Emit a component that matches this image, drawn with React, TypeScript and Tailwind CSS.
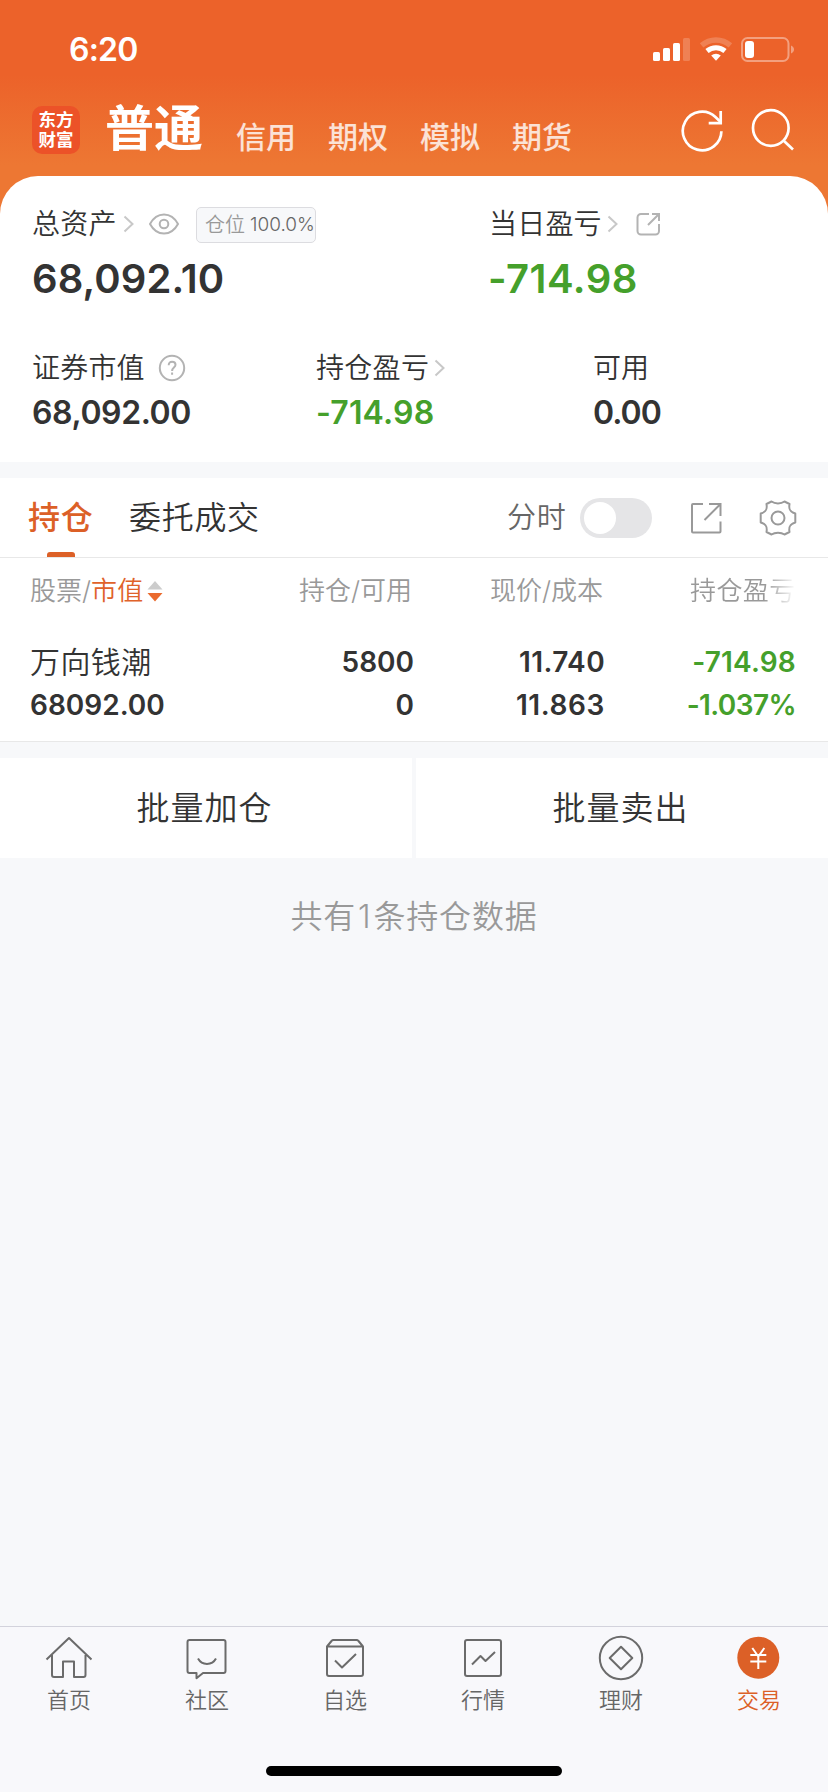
import type { ReactNode } from "react";

const Chevron = () => (
  <svg className="block h-[18px] w-[12px]" viewBox="0 0 12 18" fill="none" stroke="#c8c8c8" strokeWidth="2">
    <path d="M1.5 1.5 9.5 9l-8 7.5" />
  </svg>
);

function StatusBar() {
  return (
    <div className="flex h-[99px] items-center justify-between pr-[34px] pl-[69px]">
      <span className="text-[32px] leading-10 font-semibold tracking-[-0.8px] text-white">6:20</span>
      <svg className="block h-[26px] w-[142px]" viewBox="0 0 142 26">
        <g fill="#fff">
          <rect x="1" y="15" width="7" height="9" rx="1.6" />
          <rect x="11" y="11" width="7" height="13" rx="1.6" />
          <rect x="21" y="6" width="7" height="18" rx="1.6" />
          <rect x="31" y="1" width="7" height="23" rx="1.6" opacity=".2" />
        </g>
        <path d="M49.6 8.4a22 22 0 0 1 28.8 0" fill="none" stroke="#fff" strokeOpacity=".2" strokeWidth="5.4" />
        <path d="M55 14a14 14 0 0 1 18 0" fill="none" stroke="#fff" strokeWidth="5" />
        <path d="M59.2 18.6a7.5 7.5 0 0 1 9.6 0L64 23.8z" fill="#fff" />
        <rect x="90" y="1" width="46.5" height="23" rx="5.5" fill="none" stroke="#fff" strokeOpacity=".4" strokeWidth="2" />
        <rect x="93" y="4" width="9" height="17" rx="3" fill="#fff" />
        <path d="M139 8.5c2 .8 3 2.300 3 4s-1 3.200-3 4z" fill="#fff" fillOpacity=".4" />
      </svg>
    </div>
  );
}

function Header() {
  return (
    <div className="flex h-[77px] pl-8">
      <div className="mt-[7px] flex h-12 w-12 flex-col items-center justify-center rounded-[10px] bg-[#ec5228] text-[17.500px] leading-5 font-bold text-white">
        <span>东方</span>
        <span>财富</span>
      </div>
      <span className="mt-[1px] ml-[25px] w-[104px] text-[49px] leading-[58px] font-bold text-white">普通</span>
      <div className="mt-[20px] ml-[27px] flex gap-8 text-[30px] leading-9 font-medium text-white/80">
        {["信用", "期权", "模拟", "期货"].map((t) => (
          <span key={t} className="w-[60px] whitespace-nowrap">{t}</span>
        ))}
      </div>
      <svg className="mt-[9px] ml-[108px] h-[44px] w-[44px]" viewBox="0 0 44 44" fill="none" stroke="#fff" strokeWidth="2.700">
        <path d="M41.400 23.200A19.300 19.300 0 1 1 35.400 9L40.600 14" />
        <path d="M40.700 3v12.200H28.700" />
      </svg>
      <svg className="mt-[9px] ml-[26px] h-[44px] w-[44px]" viewBox="0 0 44 44" fill="none" stroke="#fff" strokeWidth="2.700">
        <circle cx="20.800" cy="20" r="17.800" />
        <path d="m33.500 32.500 9.500 9" />
      </svg>
    </div>
  );
}

function Summary() {
  return (
    <section className="h-[286px] rounded-t-[38px] bg-white text-[#333]">
      <div className="flex h-[48px] pt-[28px] pl-8">
        <div className="flex h-10 w-[457px] items-center">
          <span className="w-[91px] text-[28px] leading-10 tracking-[0.2px]">总资产</span>
          <Chevron />
          <svg className="ml-[14px] h-[22px] w-[30px]" viewBox="0 0 30 22" fill="none" stroke="#b3b3b3" strokeWidth="2">
            <path d="M1 11C4.500 4.500 9.300 1.500 15 1.500S25.500 4.500 29 11c-3.500 6.500-8.300 9.500-14 9.500S4.500 17.500 1 11z" />
            <circle cx="15" cy="11" r="4.300" />
          </svg>
          <div className="mt-[1px] ml-[17px] flex h-9 w-[120px] items-center rounded-[5px] border border-[#dcdce0] bg-[#f7f8fa] pl-2 whitespace-nowrap text-[#666]">
            <span className="text-[20px] leading-8 text-[#999]">仓位</span>
            <span className="ml-[5px] text-[19px] leading-8">100.0%</span>
          </div>
        </div>
        <div className="flex h-10 items-center">
          <span className="w-[118px] text-[28px] leading-10 tracking-[0.200px]">当日盈亏</span>
          <Chevron />
          <svg className="ml-[17px] h-[24px] w-[24px]" viewBox="0 0 24 24" fill="none" stroke="#b3b3b3" strokeWidth="2">
            <path d="M13 2H5a3.500 3.500 0 0 0-3.500 3.500V19A3.500 3.500 0 0 0 5 22.500h14.500A3.500 3.500 0 0 0 23 19v-7" />
            <path d="M16 2h7v7M23 2 12 13" />
          </svg>
        </div>
      </div>
      <div className="flex h-[88px] pt-[31px] pl-8 text-[40px] leading-[48px] font-semibold">
        <span className="w-[456px] tracking-[0.100px]">68,092.10</span>
        <span className="tracking-[0.500px] text-[#45a02b]">-714.98</span>
      </div>
      <div className="flex pt-[36px] pl-8 text-[28px] leading-10">
        <div className="w-[284px]">
          <div className="flex items-center">
            <span className="w-[126px] tracking-[0.200px]">证券市值</span>
            <svg className="h-[28px] w-[28px]" viewBox="0 0 28 28" fill="none" stroke="#b3b3b3" strokeWidth="2">
              <circle cx="14" cy="14" r="12.200" />
              <path d="M10.700 11.300c0-2.200 1.300-3.600 3.400-3.600s3.400 1.200 3.400 3.100c0 2.700-3.400 2.900-3.400 6.100M14.100 18.500v2.300" />
            </svg>
          </div>
          <div className="mt-[5px] text-[32px] font-semibold tracking-[-0.400px]">68,092.00</div>
        </div>
        <div className="w-[277px]">
          <div className="flex items-center">
            <span className="w-[118px] tracking-[0.300px]">持仓盈亏</span>
            <Chevron />
          </div>
          <div className="mt-[5px] text-[32px] font-semibold tracking-[0.200px] text-[#45a02b]">-714.98</div>
        </div>
        <div>
          <div>可用</div>
          <div className="mt-[5px] text-[32px] font-semibold tracking-[-1px]">0.00</div>
        </div>
      </div>
    </section>
  );
}

function Toolbar() {
  return (
    <div className="flex h-20 border-b border-[#e8e8e8] text-[32px] leading-[80px] tracking-[0.700px]">
      <div className="ml-[28px] flex w-[66px] flex-col">
        <span className="h-[74px] font-medium text-[#dc6027]">持仓</span>
        <span className="ml-[19px] h-[5px] w-7 rounded-t-[3px] bg-[#dc6027]" />
      </div>
      <span className="ml-[35px] w-[378px] text-[#333]">委托成交</span>
      <span className="w-[73px] text-[29px] leading-[80px] text-[#666]">分时</span>
      <div className="mt-5 flex h-10 w-[72px] items-center rounded-full bg-[#e5e5e7] pl-1">
        <span className="h-8 w-8 rounded-full bg-white" />
      </div>
      <svg className="mt-[24px] ml-[38px] h-[32px] w-[32px]" viewBox="0 0 32 32" fill="none" stroke="#999" strokeWidth="2">
        <path d="M13 2H3a1 1 0 0 0-1 1v26.500a1 1 0 0 0 1 1h26.500a1 1 0 0 0 1-1V19.500" />
        <path d="M19 2h11.500v12M30 2.500 14.500 18" />
      </svg>
      <svg className="mt-[21px] ml-[36px] h-[38px] w-[40px]" viewBox="-20 -19 40 38" fill="none" stroke="#999" strokeWidth="2" strokeLinejoin="round">
        <path d="M-6.500-16.500C-3-14 3-14 6.500-16.500L11.500-14C10.500-8.500 12-6 17.300-4.500V4.500C12 6 10.500 8.500 11.500 14L6.500 16.500C3 14-3 14-6.500 16.500L-11.500 14C-10.500 8.500-12 6-17.300 4.500V-4.500C-12-6-10.500-8.500-11.500-14z" />
        <circle r="6.500" />
      </svg>
    </div>
  );
}

const Cell = ({ a, b, className }: { a: ReactNode; b: ReactNode; className: string }) => (
  <div className={className}>
    <div className="h-[43px]">{a}</div>
    <div className="h-[43px]">{b}</div>
  </div>
);

function Holdings() {
  return (
    <section className="h-[184px] border-b border-[#e8e8e8] text-[#333]">
      <div className="flex h-[83px] pl-[30px] text-[26px] leading-[65px] text-[#999]">
        <div className="flex w-[184px] items-center self-start">
          <span>股票/</span>
          <span className="tracking-[0.200px] text-[#e0622a]">市值</span>
          <svg className="ml-[4px] h-[22px] w-4" viewBox="0 0 16 22">
            <path d="M8 1l7.500 8.500H.5z" fill="#ccc" />
            <path d="M8 21.500l7.500-8.500H.5z" fill="#ea6a2e" />
          </svg>
        </div>
        <span className="w-[198px] text-right">持仓/可用</span>
        <span className="w-[191px] text-right">现价/成本</span>
        <span className="ml-[87px] bg-linear-to-r from-[#999] from-70% to-[#fff] bg-clip-text tracking-[0.400px] whitespace-nowrap text-transparent">持仓盈亏</span>
      </div>
      <div className="flex pl-[30px] text-[28px] leading-[43px] font-semibold">
        <Cell className="w-[184px]" a={<span className="text-[30px] font-[350] tracking-[0.400px]">万向钱潮</span>} b="68092.00" />
        <Cell className="w-[200px] text-right" a="5800" b="0" />
        <Cell
          className="w-[191px] text-right"
          a={<span className="tracking-[0.400px]">11.740</span>}
          b={<span className="tracking-[0.600px]">11.863</span>}
        />
        <Cell
          className="w-[191px] text-right text-[#45a02b]"
          a={<span className="tracking-[0.200px]">-714.98</span>}
          b={<span className="tracking-[-0.600px]">-1.037%</span>}
        />
      </div>
    </section>
  );
}

const tabs: { label: string; icon: ReactNode; active?: boolean }[] = [
  {
    label: "首页",
    icon: <path d="M1.500 24.500 24 3l22.500 21.500M7 20v20a2 2 0 0 0 2 2h9V26.500h11V42h9.500a2 2 0 0 0 2-2V20" />,
  },
  {
    label: "社区",
    icon: (
      <>
        <path d="M6.500 5h34a2 2 0 0 1 2 2v29a2 2 0 0 1-2 2H20l-6.500 5.200V38h-7a2 2 0 0 1-2-2V7a2 2 0 0 1 2-2z" />
        <path d="M15 23.500c4 7.200 14 7.200 18 0" />
      </>
    ),
  },
  {
    label: "自选",
    icon: (
      <>
        <path d="M6 11.500h36V39a2 2 0 0 1-2 2H8a2 2 0 0 1-2-2V11.500L10.500 6a2.500 2.500 0 0 1 2-1h23a2.500 2.500 0 0 1 2 1l4.500 5.500" />
        <path d="m14 25.500 7 7L35 19" />
      </>
    ),
  },
  {
    label: "行情",
    icon: (
      <>
        <rect x="6" y="5" width="36" height="36" rx="2" />
        <path d="m13 29.500 8.500-8.500 5 5L36 17" />
      </>
    ),
  },
  {
    label: "理财",
    icon: (
      <>
        <circle cx="24" cy="23" r="21.200" />
        <path d="M24 11.800 35.300 23 24 34.200 12.700 23z" />
      </>
    ),
  },
  {
    label: "交易",
    active: true,
    icon: (
      <>
        <circle cx="23.300" cy="22.700" r="21" fill="#dc6027" stroke="none" />
        <path d="m17.300 13 6 8.500 6-8.500M23.300 21.500v12.500M15.300 20h16M15.300 26.500h16" stroke="#fff" />
      </>
    ),
  },
];

function TabBar() {
  return (
    <nav className="flex h-[166px] flex-col border-t border-[#d3d3dc] bg-[#f8f8fb]">
      <div className="grid h-[139px] grid-cols-6">
        {tabs.map((t) => (
          <div key={t.label} className="flex flex-col items-center pt-[8px]">
            <svg className="h-12 w-12" viewBox="0 0 48 48" fill="none" stroke="#6b6b6b" strokeWidth="2" strokeLinejoin="round">
              {t.icon}
            </svg>
            <span className={t.active ? "mt-[1px] text-[22px] leading-8 text-[#dc6027]" : "mt-[1px] text-[22px] leading-8 text-[#666]"}>{t.label}</span>
          </div>
        ))}
      </div>
      <div className="mx-auto h-[10px] w-[296px] rounded-full bg-black" />
    </nav>
  );
}

export default function App() {
  return (
    <div className="flex h-[1792px] w-[828px] flex-col overflow-hidden bg-[#f7f8fa] font-['Inter','Noto_Sans_CJK_SC',sans-serif] font-[350]" lang="zh-CN">
      <div className="bg-[linear-gradient(180deg,#ec622a_0,#ec622a_75px,#ed7733_165px,#ed7733_100%)]">
        <StatusBar />
        <Header />
        <Summary />
      </div>
      <main className="mt-4 flex-1">
        <div className="bg-white">
          <Toolbar />
          <Holdings />
        </div>
        <div className="mt-4 flex h-[100px] gap-1 text-center text-[33px] leading-[99px] tracking-[1px] text-[#333]">
          <button className="flex-1 bg-white pr-[3px]">批量加仓</button>
          <button className="flex-1 bg-white pr-[3px]">批量卖出</button>
        </div>
        <p className="mt-[39px] text-center text-[32px] leading-10 tracking-[0.800px] text-[#999]">
          共有<span className="mx-[2px]">1</span>条持仓数据
        </p>
      </main>
      <TabBar />
    </div>
  );
}
